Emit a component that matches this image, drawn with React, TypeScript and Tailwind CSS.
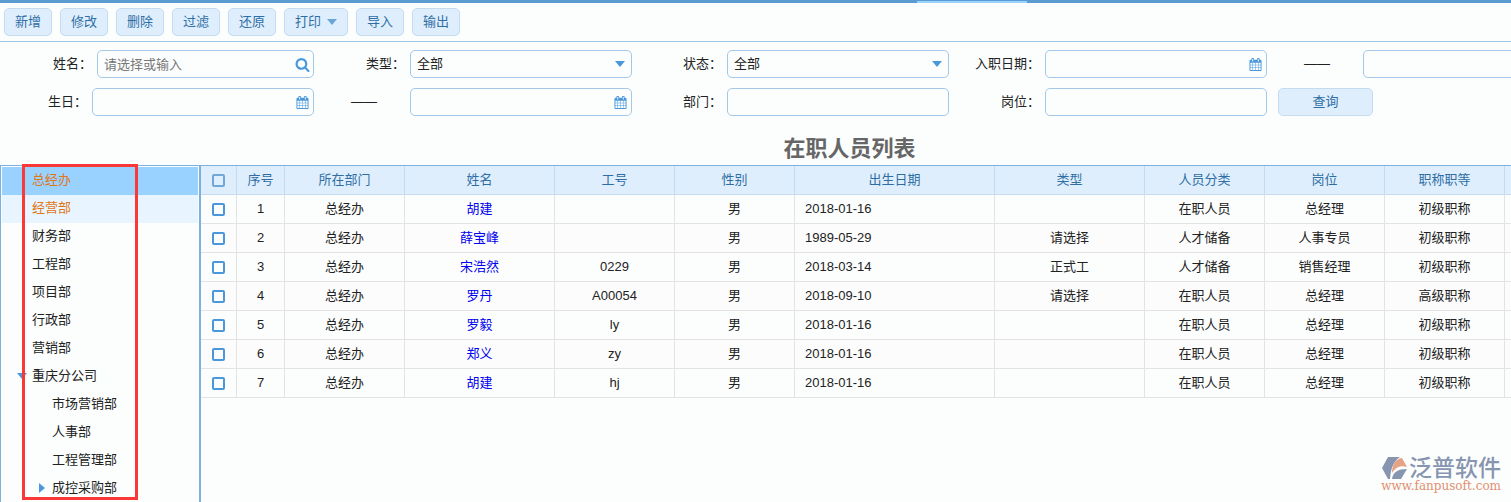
import type { ReactNode } from 'react';
import { clsx } from 'clsx';

type Department = {
    name: string;
    level?: number;
    state?: 'open' | 'closed';
};

const ACTIONS = ['新增', '修改', '删除', '过滤', '还原', '打印', '导入', '输出'];

const DEPARTMENTS: Department[] = [
    { name: '总经办' },
    { name: '经营部' },
    { name: '财务部' },
    { name: '工程部' },
    { name: '项目部' },
    { name: '行政部' },
    { name: '营销部' },
    { name: '重庆分公司', state: 'open' },
    { name: '市场营销部', level: 1 },
    { name: '人事部', level: 1 },
    { name: '工程管理部', level: 1 },
    { name: '成控采购部', level: 1, state: 'closed' },
];

const COLUMNS = [
    { title: '序号', width: 'w-[48px]' },
    { title: '所在部门', width: 'w-[120px]' },
    { title: '姓名', width: 'w-[150px]' },
    { title: '工号', width: 'w-[120px]' },
    { title: '性别', width: 'w-[120px]' },
    { title: '出生日期', width: 'w-[200px]' },
    { title: '类型', width: 'w-[150px]' },
    { title: '人员分类', width: 'w-[120px]' },
    { title: '岗位', width: 'w-[120px]' },
    { title: '职称职等', width: 'w-[120px]' },
    { title: '', width: 'w-[120px]' },
];

const NAME_COLUMN = 2;
const BIRTHDAY_COLUMN = 5;

const ROWS = [
    ['1', '总经办', '胡建', '', '男', '2018-01-16', '', '在职人员', '总经理', '初级职称', ''],
    ['2', '总经办', '薛宝峰', '', '男', '1989-05-29', '请选择', '人才储备', '人事专员', '初级职称', ''],
    ['3', '总经办', '宋浩然', '0229', '男', '2018-03-14', '正式工', '人才储备', '销售经理', '初级职称', ''],
    ['4', '总经办', '罗丹', 'A00054', '男', '2018-09-10', '请选择', '在职人员', '总经理', '高级职称', ''],
    ['5', '总经办', '罗毅', 'ly', '男', '2018-01-16', '', '在职人员', '总经理', '初级职称', ''],
    ['6', '总经办', '郑义', 'zy', '男', '2018-01-16', '', '在职人员', '总经理', '初级职称', ''],
    ['7', '总经办', '胡建', 'hj', '男', '2018-01-16', '', '在职人员', '总经理', '初级职称', ''],
];

const FIELD = 'h-7 w-full rounded-[5px] border border-[#a3c8e8] bg-transparent px-1.5 outline-none';

function CalendarIcon() {
    return (
        <svg viewBox="0 0 1792 1792" className="size-[13px] fill-[#4a97dc]">
            <path d="M192 1664h288v-288h-288v288zM544 1664h320v-288h-320v288zM192 1312h288v-320h-288v320zM544 1312h320v-320h-320v320zM192 928h288v-288h-288v288zM928 1664h320v-288h-320v288zM544 928h320v-288h-320v288zM1312 1664h288v-288h-288v288zM928 1312h320v-320h-320v320zM576 448v-288q0-13-9.5-22.5t-22.5-9.5h-64q-13 0-22.5 9.5t-9.5 22.5v288q0 13 9.5 22.5t22.5 9.5h64q13 0 22.5-9.5t9.5-22.5zM1312 1312h288v-320h-288v320zM928 928h320v-288h-320v288zM1312 928h288v-288h-288v288zM1344 448v-288q0-13-9.5-22.5t-22.5-9.5h-64q-13 0-22.5 9.5t-9.5 22.5v288q0 13 9.5 22.5t22.5 9.5h64q13 0 22.5-9.5t9.5-22.5zM1728 384v1280q0 52-38 90t-90 38h-1408q-52 0-90-38t-38-90v-1280q0-52 38-90t90-38h128v-96q0-66 47-113t113-47h64q66 0 113 47t47 113v96h384v-96q0-66 47-113t113-47h64q66 0 113 47t47 113v96h128q52 0 90 38t38 90z" />
        </svg>
    );
}

function SearchIcon() {
    return (
        <svg viewBox="0 0 1792 1792" className="size-[15px] fill-[#4a97dc]">
            <path d="M1216 832q0-185-131.5-316.5t-316.5-131.5-316.5 131.5-131.5 316.5 131.5 316.5 316.5 131.5 316.5-131.5 131.5-316.5zm512 832q0 52-38 90t-90 38q-54 0-90-38l-343-342q-179 124-399 124-143 0-273.5-55.5t-225-150-150-225-55.5-273.5 55.5-273.5 150-225 225-150 273.5-55.5 273.5 55.5 225 150 150 225 55.5 273.5q0 220-124 399l343 343q37 37 37 90z" />
        </svg>
    );
}

function Caret({ className }: { className?: string }) {
    return (
        <svg viewBox="0 0 10 6" className={clsx('h-[6px] w-[10px]', className)}>
            <path d="M0 0h10L5 6z" />
        </svg>
    );
}

type FieldProps = {
    id: string;
    label: string;
    icon?: ReactNode;
    placeholder?: string;
    // "to" fields of a date range show a dash instead of their label
    range?: boolean;
    select?: boolean;
    narrow?: boolean;
};

function Field({ id, label, icon, placeholder, range, select, narrow }: FieldProps) {
    return (
        <div className="flex items-center">
            {range ? (
                <label htmlFor={id} aria-label={label} className="flex-1 pl-1 text-center">
                    ——
                </label>
            ) : (
                <label htmlFor={id} className="flex-1 pr-[5px] text-right whitespace-nowrap">
                    {label}：
                </label>
            )}
            <div className={clsx('relative flex-none', narrow ? 'w-[217px]' : 'w-[222px]')}>
                {select ? (
                    <select id={id} className={clsx(FIELD, 'appearance-none')}>
                        <option>全部</option>
                    </select>
                ) : (
                    <input id={id} type="text" placeholder={placeholder} className={clsx(FIELD, 'placeholder:text-[#777]')} />
                )}
                {icon && (
                    <span className="pointer-events-none absolute inset-y-0 right-1 flex w-4 items-center justify-center">
                        {icon}
                    </span>
                )}
            </div>
        </div>
    );
}

function Toolbar() {
    return (
        <div className="flex gap-2 border-b border-[#9dc5e4] px-1 pt-[5px] pb-[5px]">
            {ACTIONS.map((action) => (
                <button
                    key={action}
                    type="button"
                    className="flex h-7 items-center gap-1.5 rounded-[5px] border border-[#c5dbf0] bg-[#dfeefc] px-2.5 text-[#2f6ea5]"
                >
                    {action}
                    {action === '打印' && <Caret className="fill-[#6aa5d8]" />}
                </button>
            ))}
        </div>
    );
}

function Filters() {
    return (
        <form className="grid grid-cols-[314px_318px_317px_318px_318px] gap-y-2.5 pt-2">
            <Field id="name" label="姓名" placeholder="请选择或输入" icon={<SearchIcon />} narrow />
            <Field id="type" label="类型" select icon={<Caret className="fill-[#4a97dc]" />} />
            <Field id="status" label="状态" select icon={<Caret className="fill-[#4a97dc]" />} />
            <Field id="hired-from" label="入职日期" icon={<CalendarIcon />} />
            <Field id="hired-to" label="入职日期至" icon={<CalendarIcon />} range />
            <Field id="born-from" label="生日" icon={<CalendarIcon />} />
            <Field id="born-to" label="生日至" icon={<CalendarIcon />} range />
            <Field id="department" label="部门" />
            <Field id="post" label="岗位" />
            <div className="pl-[11px]">
                <button type="button" className="h-7 w-[95px] rounded-[5px] border border-[#c5dbf0] bg-[#dfeefc] text-[#2f6ea5]">
                    查询
                </button>
            </div>
        </form>
    );
}

function DepartmentTree() {
    return (
        <nav className="relative w-[201px] flex-none border-r-2 border-l border-[#7bb1df] px-px pt-px">
            <ul>
                {DEPARTMENTS.map(({ name, level, state }, index) => (
                    <li
                        key={name}
                        className={clsx(
                            'flex h-7 items-center pb-0.5',
                            level ? 'pl-[34px]' : 'pl-[14px]',
                            index === 0 && 'bg-[#99d1ff] text-[#e07818]',
                            index === 1 && 'bg-[#e8f4ff] text-[#e07818]',
                        )}
                    >
                        <span className="flex w-4 items-center pl-px">
                            {state && (
                                <Caret className={clsx('fill-[#4a97dc]', state === 'closed' && '-rotate-90')} />
                            )}
                        </span>
                        {name}
                    </li>
                ))}
            </ul>
            <div className="pointer-events-none absolute -top-[2px] left-[21px] h-[336px] w-[116px] border-3 border-[#fb3838]" />
        </nav>
    );
}

function Checkbox({ label, className }: { label: string; className: string }) {
    return (
        <input
            type="checkbox"
            aria-label={label}
            className={clsx('block size-[13px] appearance-none rounded-[2px] border-2', className)}
        />
    );
}

function StaffTable() {
    return (
        <div className="min-w-0 flex-1 overflow-hidden">
            <table className="w-[1424px] table-fixed border-separate border-spacing-0 text-center">
                <colgroup>
                    <col className="w-[36px]" />
                    {COLUMNS.map(({ title, width }) => (
                        <col key={title} className={width} />
                    ))}
                </colgroup>
                <thead>
                    <tr className="h-[29px] bg-[#dfeefc] text-[#2f6ea5]">
                        <th className="border-r border-b border-[#c5dbf0] p-0 pl-[11px]">
                            <Checkbox label="全选" className="border-[#6fa8d8]" />
                        </th>
                        {COLUMNS.map(({ title }) => (
                            <th key={title} className="border-r border-b border-[#c5dbf0] p-0 font-normal">
                                {title}
                            </th>
                        ))}
                    </tr>
                </thead>
                <tbody>
                    {ROWS.map((row) => (
                        <tr key={row[0]} className="h-[29px] even:bg-[#fcfcfc]">
                            <td className="border-r border-b border-[#e3e3e3] p-0 pl-[11px]">
                                <Checkbox label={`选择第${row[0]}行`} className="border-[#4a97dc]" />
                            </td>
                            {row.map((value, index) => (
                                <td
                                    key={index}
                                    className={clsx(
                                        'border-r border-b border-[#e3e3e3] p-0',
                                        index === BIRTHDAY_COLUMN && 'pl-2.5 text-left',
                                    )}
                                >
                                    {index === NAME_COLUMN ? (
                                        <a href="#" className="text-[#0000ee]">
                                            {value}
                                        </a>
                                    ) : (
                                        value
                                    )}
                                </td>
                            ))}
                        </tr>
                    ))}
                </tbody>
            </table>
        </div>
    );
}

function Watermark() {
    return (
        <div className="absolute right-2.5 bottom-2.5 flex flex-col">
            <div className="flex items-center justify-end gap-0.5 text-[23px] leading-6 font-medium text-[#8795b0]">
                <svg viewBox="0 0 25 23" className="h-[23px] w-[25px]">
                    <path d="M6 0h12C12 4 9 10 8 22H6L0 11z" fill="#8795b0" />
                    <path d="M10 16C10 8 13 2 20 1l5 9c-7-2-11 0-15 6z" fill="#e5a285" />
                    <path d="M10 22c1-7 6-10 15-10l-6 10z" fill="#8795b0" />
                </svg>
                泛普软件
            </div>
            <div className="font-['DejaVu_Serif',serif] text-[12px] leading-3 text-[#e08f70]">www.fanpusoft.com</div>
        </div>
    );
}

export default function App() {
    return (
        <div
            lang="zh-CN"
            className="relative flex h-screen flex-col overflow-hidden bg-[#fcfefe] font-['Liberation_Sans','Noto_Sans_CJK_SC',sans-serif] text-[13px] leading-5 text-[#222]"
        >
            <div className="h-[3px] flex-none bg-[#5a9bd1]">
                <div className="flex h-full items-end pl-[917px]">
                    <div className="h-[2px] w-[110px] bg-[#99d1ff]" />
                </div>
            </div>
            <Toolbar />
            <Filters />
            <h1 className="pt-[19px] pb-[2px] pl-[188px] text-center text-[22px] leading-7 font-bold text-[#666]">
                在职人员列表
            </h1>
            <main className="flex min-h-0 flex-1 border-t border-[#7bb1df]">
                <DepartmentTree />
                <StaffTable />
            </main>
            <Watermark />
        </div>
    );
}
